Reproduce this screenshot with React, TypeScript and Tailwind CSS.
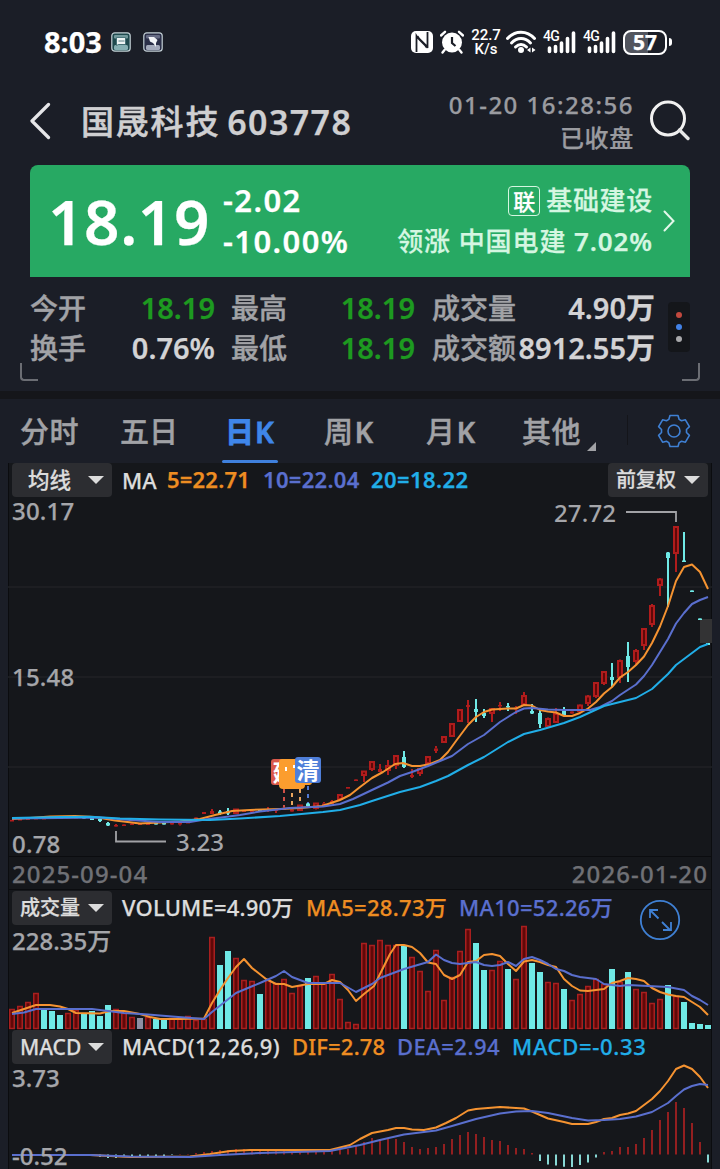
import type { ReactNode } from 'react';

type Candle = [kind: 'r' | 'c', high: number, open: number, close: number, low: number];
type Bar = [kind: 'r' | 'c' | 'g', top: number];

const X0 = 12;
const STEP = 8;

const RED = '#b01c1c';
const RED_FILL = '#600808';
const CYAN = '#6fe9e6';
const ORANGE = '#f59331';
const VIOLET = '#5a6fce';
const SKY = '#21aee8';

const candles: Candle[] = [
  ['r', 820, 820, 821.5, 821.5], ['r', 819, 819, 820.5, 820.5], ['r', 818.5, 818.5, 819.5, 819.5],
  ['r', 818, 818, 819, 819], ['r', 818, 818, 819, 819], ['r', 817.5, 817.5, 818.5, 818.5],
  ['c', 817.5, 817.5, 819, 819], ['r', 817, 817, 818.5, 818.5], ['r', 817, 817, 818.5, 818.5],
  ['c', 817, 817, 818.5, 818.5], ['c', 817, 818, 820, 820], ['c', 818, 819, 821, 822],
  ['c', 822, 823, 825.5, 826], ['r', 824, 825, 826.5, 827], ['r', 824, 824.5, 826, 826],
  ['r', 823, 823.5, 825, 825], ['r', 823, 823.5, 825, 825], ['r', 822.5, 823, 825, 825],
  ['c', 822.5, 823, 824.5, 824.5], ['c', 822.5, 823, 824.5, 824.5], ['r', 822.5, 823, 824.5, 825],
  ['r', 822.5, 823, 824.5, 825.5], ['r', 821, 821.5, 823.5, 823.5], ['r', 817, 817.5, 819, 819],
  ['r', 812, 812, 814, 814], ['r', 809, 811, 814, 814], ['c', 810, 811.5, 814, 815],
  ['c', 808, 811, 813.5, 815], ['r', 809, 809.5, 813, 814], ['r', 810, 810, 812, 812],
  ['r', 810, 811, 812.5, 813], ['c', 809, 810, 811, 811], ['r', 807, 809.5, 811, 812],
  ['r', 809, 809.5, 811, 813], ['r', 807, 808, 810, 810], ['r', 809, 809.5, 811.5, 812],
  ['r', 805, 805.5, 810, 811], ['c', 803, 803.5, 806, 807], ['r', 803, 803.5, 808, 809.5],
  ['r', 802, 803.5, 806, 806], ['r', 800, 801, 804, 804], ['r', 794, 795, 799, 800],
  ['r', 787, 787, 788.7, 788.7], ['r', 779, 779.5, 781, 781], ['r', 771, 771.5, 775, 782],
  ['r', 761, 762, 769, 771], ['r', 764, 769, 772, 772], ['r', 760, 766, 770, 775],
  ['r', 755, 756, 765, 769], ['c', 751, 757, 767, 768], ['r', 769, 775, 777, 778],
  ['r', 768, 769, 773, 776], ['r', 756, 757, 763, 764], ['r', 746, 748.5, 751, 753],
  ['r', 736, 737, 742, 743], ['r', 723, 724, 736, 737], ['r', 709, 710, 721, 722],
  ['r', 700, 705, 707, 723], ['c', 699, 709, 712, 722], ['c', 709, 713, 716, 718],
  ['r', 708, 709, 713, 722], ['r', 702, 705, 706.5, 711], ['c', 703, 706, 707.5, 711],
  ['r', 706, 707.5, 709.5, 714], ['r', 692, 696, 704, 706], ['c', 704, 711, 713.5, 714],
  ['c', 710, 713, 724, 728], ['r', 717.5, 719, 726, 727], ['r', 708, 714, 722, 723],
  ['c', 707, 709, 715, 716], ['r', 711, 711.5, 713.5, 714], ['r', 704.5, 705.5, 711, 712],
  ['r', 695, 696.5, 703, 706], ['r', 682, 683, 696, 698], ['r', 671, 672, 683, 685],
  ['c', 663, 677, 680, 687], ['r', 659.5, 661, 677, 683], ['c', 642, 656, 667, 682],
  ['r', 649, 651, 661, 665], ['r', 628, 629, 645, 650], ['r', 604, 606, 624, 627],
  ['r', 578, 579.5, 585, 596], ['c', 552, 552.5, 558, 607], ['r', 526, 527, 553, 572],
  ['c', 532, 560.5, 562, 562], ['c', 590.5, 590.5, 592, 592], ['c', 618.5, 618.5, 620, 620],
  ['c', 643, 643, 645, 645]
];

const volumes: Bar[] = [
  ['r', 1009], ['r', 1006], ['r', 1002], ['r', 993], ['c', 1009], ['c', 1011], ['c', 1015], ['r', 1013],
  ['r', 1010], ['c', 1013], ['c', 1011], ['c', 1016], ['c', 1005], ['r', 1009], ['r', 1013], ['r', 1017],
  ['g', 1018], ['r', 1017], ['c', 1019], ['c', 1019], ['r', 1018], ['r', 1018], ['r', 1016], ['r', 1020],
  ['r', 1019], ['r', 937], ['c', 965], ['c', 951], ['r', 958], ['r', 980], ['r', 981], ['c', 994],
  ['r', 980], ['r', 983], ['r', 979], ['r', 993], ['r', 986], ['c', 978], ['r', 976], ['r', 983],
  ['r', 974], ['r', 999], ['r', 1022], ['r', 1024], ['r', 943], ['r', 945], ['r', 940], ['r', 945],
  ['r', 945], ['c', 946], ['r', 957], ['r', 971], ['r', 991], ['r', 950], ['r', 1000], ['r', 977],
  ['r', 951], ['r', 929], ['c', 943], ['c', 970], ['r', 970], ['r', 961], ['c', 969], ['r', 979],
  ['r', 926], ['c', 963], ['c', 972], ['r', 982], ['r', 983], ['c', 989], ['r', 1000], ['r', 994],
  ['r', 986], ['r', 979], ['r', 984], ['c', 969], ['r', 982], ['c', 972], ['r', 989], ['r', 992],
  ['r', 1003], ['r', 999], ['c', 985], ['r', 996], ['c', 1002], ['c', 1023], ['c', 1024], ['c', 1025]
];

// signed bar ends around the zero line of the histogram
const MACD_ZERO = 1154.5;
const macdBars = [
  1155, 1155, 1155, 1154, 1154, 1155, 1156, 1156, 1156, 1156, 1156, 1157, 1158, 1158, 1157, 1157, 1156, 1156, 1156,
  1156, 1155, 1154, 1154, 1153, 1152, 1151, 1150, 1150, 1149, 1149, 1150, 1150, 1151, 1151, 1151, 1152, 1151, 1152,
  1152, 1152, 1151, 1150, 1149, 1146, 1142, 1138, 1139, 1139, 1139, 1142, 1147, 1149, 1148, 1147, 1144, 1139, 1135,
  1132, 1134, 1137, 1140, 1141, 1145, 1148, 1149, 1153, 1161, 1164.5, 1165.5, 1166.7, 1167, 1165, 1162.5, 1157.5,
  1152, 1151, 1147, 1147, 1144, 1138, 1130, 1120, 1112, 1102, 1108, 1123, 1142, 1162.5
];

// keep the histogram start clear of the value label
const macdStart = 10;

const ma5 =
  '12,819 30,818 50,816.5 75,816 95,817 115,820.5 140,823.5 160,822.5 180,821.5 200,819 215,815 232,811 250,810 280,809 300,808 322,806 340,800 350,795 360,787 372,778 383,772 395,764 403,763 412,766 420,766 430,764 440,760 448,752 456,741 468,725 476,717 484,712 492,709.5 500,709 508,708.5 516,708.5 524,705 532,705.5 540,710 548,711.5 556,712.5 564,716 572,716 580,713 588,708.5 596,702 604,693.5 612,687 620,677.5 628,672 636,665 644,656.5 652,643 660,626.5 668,606 676,581 684,567 692,564.5 700,572 708,589';
const ma10 =
  '12,818.5 60,818 100,817.5 130,820 160,822 190,822 205,819.5 225,817 240,815 260,811.5 290,808 323,806.5 340,804 353,799 372,790 388,782.5 400,776 412,772 428,766 440,761 452,756 468,744 484,735 500,722 508,717 516,712 524,708.5 532,708 548,709.5 564,710 590,710 600,707 612,701 620,695 636,684.5 644,676 652,665 660,652 668,639 676,623.5 684,613 692,604 700,600 708,597';
const ma20 =
  '12,818 60,817 90,816.7 120,818.5 160,819.5 210,820 240,818.5 280,816 323,812 340,810 360,805 372,801 400,792 420,787 436,781 448,776 468,765 484,757 508,742 524,734 540,730 564,723 580,717 604,706 620,702 636,698 652,689 668,674 676,665 692,653 700,647 708,644';

const volMa5 =
  '12,1013 24,1009 36,1005 50,1005 60,1006.5 68,1009 76,1013 100,1013.5 110,1011 124,1011 140,1014 150,1017 160,1019 180,1019 204,1018.5 212,1003 220,990 228,978 236,967 244,959 252,968 266,979 276,984 284,984 292,987 308,984 324,984 332,980 340,982 348,990 356,1001 364,994 374,986 382,970 390,954 396,945 404,945 412,947 420,953 428,962.5 436,964 444,975 452,979 460,975 468,962 476,961 484,955 492,954 500,956 508,964 516,971 524,961.5 532,960 540,962 548,965 556,967 564,979 572,986 580,990.5 588,991 604,989 612,983 620,981 628,978 636,979 644,981 652,988 660,992 668,994.5 676,996 684,997 692,1002 700,1007 708,1015';
const volMa10 =
  '12,1014 24,1012.5 36,1009 60,1009 92,1009 108,1011 124,1013 148,1014.5 172,1016.5 204,1019 212,1012 236,993 260,983 276,976 284,971 292,977 308,983 340,983 356,992 372,984 380,978 404,969 428,962 436,954.5 444,960 452,963 460,964 476,962 484,965 492,966 500,965 508,962 516,966 524,959 532,957 540,960 548,964 556,969 564,971 572,975 580,977 596,979 604,984 620,986 628,985 668,987 684,990 692,996 700,1000 708,1005';

const dif =
  '12,1155 90,1155 130,1157 190,1156.5 210,1154 230,1151 250,1150 330,1150 350,1145 360,1139 372,1133 388,1130 396,1128 404,1128 412,1129.5 424,1130 436,1127.5 446,1123 456,1118 468,1110.5 476,1109 500,1107 524,1108.5 532,1111.5 540,1115 548,1118.5 564,1122 572,1124 588,1124 596,1122 604,1119 612,1118 620,1115 628,1113.5 636,1111 644,1105 652,1099 660,1091 668,1081 676,1069 684,1065.5 692,1069 700,1077 708,1088';
const dea =
  '12,1155 90,1155 130,1156.5 190,1157 220,1155 260,1153 330,1151 350,1147 360,1145 380,1140 404,1134.5 436,1130.5 452,1126 476,1119 500,1113.5 516,1111.5 532,1111 548,1113 572,1118 588,1120.5 604,1120 620,1119 636,1116.5 652,1112 668,1103 676,1096 684,1089.5 692,1086 700,1084 708,1085';

function Line({ points, color }: { points: string; color: string }) {
  return (
    <polyline points={points} fill="none" stroke={color} strokeWidth={2} strokeLinejoin="round" />
  );
}

function AppBadge({ dark }: { dark?: boolean }) {
  return (
    <svg className="size-5" viewBox="0 0 20 20">
      <rect x="0.8" y="0.8" width="18.4" height="18.4" rx="3" fill={dark ? '#2b2f48' : '#1f4a4e'} stroke="#c3cfd4" strokeWidth="1.2" />
      <rect x="3" y="3" width="14" height="3.5" rx="1" fill={dark ? '#666b84' : '#72999c'} />
      <rect x="3" y="13" width="14" height="5" rx="1.5" fill={dark ? '#a3a9ba' : '#86b0b3'} />
      {dark ? (
        <path d="M5.5 5H11l3.5 3-1.500 3v4l-3-4-3-1.500z" fill="#f1f3f6" />
      ) : (
        <path d="M5.5 5.500h9v7h-7l-2 1z M7.5 9h6" fill="#eef4f4" stroke="#35656a" strokeWidth="0.8" />
      )}
    </svg>
  );
}

function Signal() {
  return (
    <div className="relative h-6 w-8">
      <span className="absolute top-0 left-0 font-['Roboto',sans-serif] text-[14px] leading-3 font-medium tracking-tighter [-webkit-text-stroke:0px]">
        4G
      </span>
      <svg className="block" width="33" height="24" viewBox="0 0 33 24">
        <path
          d="M6.5 18v3.500M12.500 16.500v5M18.500 13v8.500M24.500 8.500v13M30.500 3v18.500"
          stroke="#fff"
          strokeWidth="3.6"
          strokeLinecap="round"
        />
      </svg>
    </div>
  );
}

function StatusBar() {
  return (
    <div className="flex h-[84px] items-center justify-between pr-12 pl-11 text-white">
      <div className="flex items-center">
        <span className="w-[67px] text-[29px] leading-8 font-bold">8:03</span>
        <AppBadge />
        <span className="w-3" />
        <AppBadge dark />
      </div>
      <div className="flex items-center">
        <svg className="mr-[7px]" width="22" height="22" viewBox="0 0 22 22">
          <rect width="22" height="22" rx="5" fill="#fff" />
          <path d="M5.5 21V5c3 5 8 7 10 11.500M16.500 1v16c-2-5-8-7-10-12" fill="none" stroke="#1b1e27" strokeWidth="1.8" />
        </svg>
        <svg className="mr-[7px]" width="24" height="24" viewBox="0 0 24 24">
          <circle cx="12" cy="12.5" r="10" fill="#fff" />
          <path d="M1 5.500L5 1.800M23 5.500l-4-3.700M4.500 20L2.500 22.500M19.500 20l2 2.500" stroke="#fff" strokeWidth="2.4" strokeLinecap="round" />
          <path d="M12 7v6l3.500 3" fill="none" stroke="#1b1e27" strokeWidth="2.2" />
        </svg>
        <div className="mr-[5px] w-[30px] text-center font-['Roboto',sans-serif] text-[15px] leading-[14px] font-medium [-webkit-text-stroke:0px]">
          <div>22.7</div>
          <div>K/s</div>
        </div>
        <svg className="mr-[7px]" width="30" height="24" viewBox="0 0 30 24">
          <path d="M1.500 8.500C9 0 21 0 28.500 8.500" fill="none" stroke="#fff" strokeWidth="3" strokeLinecap="round" />
          <path d="M5.500 13c5.500-6 13.500-6 19 0" fill="none" stroke="#fff" strokeWidth="3" strokeLinecap="round" />
          <path d="M9.500 17c3.500-3.500 7.500-3.500 11 0" fill="none" stroke="#fff" strokeWidth="3" strokeLinecap="round" />
          <circle cx="15" cy="20" r="3" fill="#fff" />
          <path d="M24.500 17.500v5l-3.500-2.500zM26 17.500v5l3.500-2.500z" fill="#fff" />
        </svg>
        <div className="mr-2">
          <Signal />
        </div>
        <div className="mr-2">
          <Signal />
        </div>
        <div className="flex h-[25px] w-[44px] items-center justify-center rounded-[8px] border-2 border-white bg-linear-to-r from-[#52555e] from-57% to-[#1b1e27] to-57% text-[21px] leading-5 font-bold">
          57
        </div>
        <span className="ml-0.5 h-2 w-[3px] rounded-r-sm bg-white" />
      </div>
    </div>
  );
}

function Header() {
  return (
    <header className="flex h-[81px] pl-[30px]">
      <svg className="mt-[18px]" width="22" height="38" viewBox="0 0 22 38">
        <path d="M18.500 2.500L2 19l16.500 16.500" fill="none" stroke="#e6e6e8" strokeWidth="3.2" strokeLinecap="round" strokeLinejoin="round" />
      </svg>
      <h1 className="ml-[29px] flex h-[75px] items-center text-[#cfcfd1]">
        <span className="text-[33px] leading-10 font-medium tracking-[1.8px] [-webkit-text-stroke:0.5px]">国晟科技</span>
        <span className="ml-[7px] text-[34px] leading-10 font-semibold tracking-[1.4px]">603778</span>
      </h1>
      <div className="ml-auto pt-1 text-right text-[#9a9ba0]">
        <div className="text-[24px] leading-[34px] font-medium tracking-[1.5px]">01-20 16:28:56</div>
        <div className="text-[24px] leading-8 font-medium tracking-[0.7px]">已收盘</div>
      </div>
      <svg className="mt-4 mr-[29px] ml-[15px]" width="42" height="42" viewBox="0 0 42 42">
        <circle cx="19" cy="18.5" r="16.5" fill="none" stroke="#f0f0f0" strokeWidth="3" />
        <path d="M30.500 30l8.500 8.500" stroke="#e8e8e8" strokeWidth="3.4" strokeLinecap="round" />
      </svg>
    </header>
  );
}

function PriceCard() {
  return (
    <section className="mx-[30px] flex h-28 items-center rounded-t-[8px] bg-[#27a963] text-white">
      <div className="w-[193px] pl-[18px] text-[62px] leading-[112px] font-semibold tracking-[0.6px]">18.19</div>
      <div className="text-[31px] leading-[41px] font-semibold tracking-[1.4px]">
        <div>-2.02</div>
        <div>-10.00%</div>
      </div>
      <div className="ml-auto text-right text-[26px] leading-[41px] font-medium text-[#d5f6e1]">
        <div className="flex items-center justify-end">
          <span className="mr-1.5 flex h-[30px] w-8 items-center justify-center rounded-[4px] border border-[#d5f6e1] text-[22px] leading-6 text-white">
            联
          </span>
          <span className="tracking-[0.7px]">基础建设</span>
        </div>
        <div className="tracking-[0.9px]">
          领涨 中国电建 <span className="font-semibold">7.02%</span>
        </div>
      </div>
      <svg className="mr-[15px] ml-2.5" width="12" height="22" viewBox="0 0 12 22">
        <path d="M1.500 1.500l9 9.500-9 9.500" fill="none" stroke="#e3f8ea" strokeWidth="2" strokeLinecap="round" />
      </svg>
    </section>
  );
}

function Stat({ label, value, green }: { label: string; value: string; green?: boolean }) {
  return (
    <div className="flex items-center justify-between leading-10">
      <span className="pt-px text-[28px] leading-[39px] font-medium whitespace-nowrap text-[#a1a2a6] [-webkit-text-stroke:0.4px]">
        {label}
      </span>
      <span
        className={`text-[29px] font-semibold whitespace-nowrap ${green ? 'text-[#1d9a20]' : 'text-[#d3d3d5]'}`}
      >
        {value}
      </span>
    </div>
  );
}

function Stats() {
  return (
    <section className="flex h-[114px] pt-[11px] pl-[30px]">
      <div className="w-[185px]">
        <Stat label="今开" value="18.19" green />
        <Stat label="换手" value="0.76%" />
      </div>
      <div className="ml-4 w-[184px]">
        <Stat label="最高" value="18.19" green />
        <Stat label="最低" value="18.19" green />
      </div>
      <div className="ml-[17px] w-[223px]">
        <Stat label="成交量" value="4.90万" />
        <Stat label="成交额" value="8912.55万" />
      </div>
      <div className="mt-[14px] ml-[13px] flex h-[50px] w-[22px] flex-col items-center justify-center gap-1.5 rounded-[4px] bg-[#14161a]">
        <span className="size-1.5 rounded-full bg-[#c2493e]" />
        <span className="size-1.5 rounded-full bg-[#4282e6]" />
        <span className="size-1.5 rounded-full bg-[#a9a9ab]" />
      </div>
    </section>
  );
}

function Tabs() {
  return (
    <nav className="flex h-16 pl-5 text-[29px] leading-[65px] font-medium text-[#a1a2a6] [-webkit-text-stroke:0.4px]">
      <span className="w-[100px] tracking-[0.6px]">分时</span>
      <span className="w-[102px]">五日</span>
      <span className="relative mr-[46px] h-16 w-14 text-center font-semibold tracking-[1px] text-[#3f86ea] [-webkit-text-stroke:0.8px]">
        日K
        <span className="absolute bottom-0 left-0 h-[3px] w-full rounded-full bg-[#3f80dd]" />
      </span>
      <span className="w-[102px] tracking-[1.5px]">
        周<span className="font-semibold">K</span>
      </span>
      <span className="w-[96px] tracking-[1.5px]">
        月<span className="font-semibold">K</span>
      </span>
      <span className="w-[65px] tracking-[0.6px]">其他</span>
      <svg className="mt-[43px]" width="9" height="9" viewBox="0 0 9 9">
        <path d="M9 0v9H0z" fill="#a1a2a6" />
      </svg>
      <span className="mt-4 ml-[31px] h-[30px] w-px bg-[#14151a]" />
      <svg className="mt-[15px] ml-[29px]" width="34" height="34" viewBox="-17 -17 34 34">
        <path
          d="M-4-15.500H4L5.200-11.600 7.500-10.300 11.400-11.200 15.400-4.300 12.500-1.500V1.500L15.400 4.300 11.400 11.200 7.500 10.300 5.200 11.600 4 15.500H-4L-5.200 11.600-7.500 10.300-11.400 11.200-15.400 4.300-12.500 1.500V-1.500L-15.400-4.300-11.400-11.200-7.500-10.300-5.200-11.600z"
          fill="none"
          stroke="#3f80d4"
          strokeWidth="1.6"
          strokeLinejoin="round"
        />
        <circle r="6" fill="none" stroke="#3f80d4" strokeWidth="1.6" />
      </svg>
    </nav>
  );
}

function Chip({ children }: { children: ReactNode }) {
  return (
    <div className="flex h-[34px] w-[100px] shrink-0 items-center justify-between rounded-[4px] bg-[#2c2d31] pr-2 pl-2 text-[20px] leading-[34px] font-medium whitespace-nowrap text-[#dcdcdc]">
      {children}
      <svg width="16" height="8" viewBox="0 0 16 8">
        <path d="M0 0h16L8 8z" fill="#dcdcdc" />
      </svg>
    </div>
  );
}

function Candles() {
  return (
    <svg className="absolute inset-0" width="704" height="394" viewBox="8 463 704 394">
      <path d="M8 587h704M8 677h704M8 767h704" stroke="#202226" strokeWidth="1.5" />
      <rect x="700" y="619" width="12" height="24" fill="#333334" />
      {candles.map(([kind, high, open, close, low], i) => {
        const x = X0 + i * STEP;
        const h = Math.max(close - open, 1.5);
        if (kind === 'c') {
          return (
            <g key={i} fill={CYAN}>
              <rect x={x - 1} y={high} width="2" height={low - high} />
              <rect x={x - 2} y={open} width="4" height={h} />
            </g>
          );
        }
        return (
          <g key={i} stroke={RED} strokeWidth="2">
            <path d={`M${x} ${high}V${open}M${x} ${close}V${low}`} />
            {h > 3 ? (
              <rect x={x - 2} y={open} width="4" height={h} fill={RED_FILL} strokeWidth="2" />
            ) : (
              <rect x={x - 2} y={open} width="4" height={h} fill={RED} stroke="none" />
            )}
          </g>
        );
      })}
      <Line points={ma5} color={ORANGE} />
      <Line points={ma10} color={VIOLET} />
      <Line points={ma20} color={SKY} />
      <path d="M626 512h50v10M116 831v10.500h50" fill="none" stroke="#a1a2a6" strokeWidth="1.8" />
      <g fontSize="24" fontWeight="550" fill="#a5a6aa">
        <text x="554" y="522" textLength="62">27.72</text>
        <text x="176" y="851" textLength="48">3.23</text>
      </g>
      <path d="M284 789v18" stroke="#cf5046" strokeWidth="2" strokeDasharray="4 4" />
      <path d="M292 793v14M300 789v16" stroke="#e9a55e" strokeWidth="2" strokeDasharray="4 4" />
      <path d="M308 786v17" stroke="#5078d2" strokeWidth="2" strokeDasharray="4 4" />
      <g fontSize="23" fontWeight="700" fill="#fff">
        <rect x="271" y="759" width="26" height="26" rx="3" fill="#d9594b" />
        <text x="272.5" y="781">建</text>
        <rect x="279" y="759" width="33" height="26" rx="3" fill="#fb9d2e" />
        <rect x="279" y="763" width="26" height="26" rx="4" fill="#fb9d2e" />
        <path d="M286 767v4M294 765v3" stroke="#fff" strokeWidth="2" />
        <rect x="295" y="757" width="26" height="26" rx="3" fill="#4f7fd9" />
        <text x="296.5" y="779">清</text>
      </g>
    </svg>
  );
}

function PricePanel() {
  return (
    <section className="relative h-[394px] border-b border-[#0b0c0f]">
      <Candles />
      <div className="relative flex items-start pr-1 pl-1 text-[22px] leading-[32px] font-medium whitespace-nowrap">
        <Chip>
          <span className="pl-2 text-[21.5px]">均线</span>
        </Chip>
        <span className="ml-2.5 w-[45px] leading-[34px] text-[#dcdcdc]">MA</span>
        <span className="w-24 font-semibold tracking-[0.2px] text-[#ee8d22]">5=22.71</span>
        <span className="w-[108px] font-semibold tracking-[0.3px] text-[#5a6fce]">10=22.04</span>
        <span className="font-semibold tracking-[0.4px] text-[#21aee8]">20=18.22</span>
        <div className="ml-auto">
          <Chip>前复权</Chip>
        </div>
      </div>
      <div className="relative flex h-[360px] flex-col pl-1 text-[24px] leading-[30px] font-medium tracking-[0.2px] text-[#a5a6aa]">
        <span className="-mt-px">30.17</span>
        <span className="mt-[136px]">15.48</span>
        <span className="mt-auto -mb-0.5">0.78</span>
      </div>
    </section>
  );
}

function VolumePanel() {
  return (
    <section className="relative h-[140px] border-b border-[#0b0c0f]">
      <svg className="absolute inset-0" width="704" height="140" viewBox="8 890 704 140">
        {volumes.map(([kind, top], i) => {
          const x = X0 + i * STEP;
          if (kind === 'r') {
            return (
              <rect key={i} x={x - 2.25} y={top + 0.5} width="4.5" height={1028 - top} fill={RED_FILL} stroke="#a81f1f" strokeWidth="1.5" />
            );
          }
          return <rect key={i} x={x - 3} y={top} width="6" height={1029 - top} fill={kind === 'g' ? '#8f90a3' : CYAN} />;
        })}
        <Line points={volMa5} color={ORANGE} />
        <Line points={volMa10} color={VIOLET} />
        <g fill="none" stroke="#3f80d4" strokeWidth="1.8">
          <circle cx="660" cy="920" r="19.2" />
          <path d="M650 918v-8h8M650 910l8.500 8.500M662 922l8.500 8.500M671 922v8h-8" />
        </g>
      </svg>
      <div className="relative flex items-start pt-px pl-1 text-[22px] leading-[32px] font-medium whitespace-nowrap">
        <Chip>成交量</Chip>
        <span className="ml-2.5 w-[184px] tracking-[0.2px] text-[#dcdcdc]">VOLUME=4.90万</span>
        <span className="w-[153px] tracking-[0.3px] text-[#ee8d22]">MA5=28.73万</span>
        <span className="tracking-[0.3px] text-[#5a6fce]">MA10=52.26万</span>
      </div>
      <div className="relative pl-1 text-[24px] leading-[32px] font-medium text-[#a5a6aa]">228.35万</div>
    </section>
  );
}

function MacdPanel() {
  return (
    <section className="relative h-[139px]">
      <svg className="absolute inset-0" width="704" height="139" viewBox="8 1030 704 139">
        {macdBars.map((end, i) => {
          if (i < macdStart) return null;
          const x = X0 + i * STEP;
          const down = end > MACD_ZERO;
          return (
            <path key={i} d={`M${x} ${MACD_ZERO}V${end}`} stroke={down ? '#88d8d5' : '#931f20'} strokeWidth="2" />
          );
        })}
        <Line points={dif} color={ORANGE} />
        <Line points={dea} color={VIOLET} />
      </svg>
      <div className="relative flex items-start pl-1 text-[22px] leading-[32px] font-medium whitespace-nowrap">
        <Chip>
          <span className="text-[21px]">MACD</span>
        </Chip>
        <span className="ml-2.5 w-[170px] tracking-[0.4px] text-[#dcdcdc]">MACD(12,26,9)</span>
        <span className="w-[105px] tracking-[0.2px] text-[#ee8d22]">DIF=2.78</span>
        <span className="w-[115px] tracking-[0.5px] text-[#5a6fce]">DEA=2.94</span>
        <span className="tracking-[0.7px] text-[#21aee8]">MACD=-0.33</span>
      </div>
      <div className="relative flex h-[105px] flex-col justify-between pl-1 text-[24px] leading-[30px] font-medium text-[#a5a6aa]">
        <span className="-mt-px">3.73</span>
        <span className="-mb-0.5">-0.52</span>
      </div>
    </section>
  );
}

export default function App() {
  return (
    <div className="h-[1169px] w-[720px] overflow-hidden bg-[#1b1e27] font-['Noto_Sans','Noto_Sans_CJK_SC',sans-serif] [-webkit-text-stroke:0.25px]">
      <StatusBar />
      <Header />
      <PriceCard />
      <div className="relative">
        <Stats />
        <span className="absolute bottom-2.5 left-5 h-[18px] w-[18px] rounded-bl-[4px] border-b-2 border-l-2 border-[#6b6d73]" />
        <span className="absolute right-5 bottom-2.5 h-[18px] w-[18px] rounded-br-[4px] border-r-2 border-b-2 border-[#6b6d73]" />
      </div>
      <div className="h-2 bg-[#15161a]" />
      <Tabs />
      <main className="mx-2 h-[706px] border-x border-[#0b0c0f] bg-[#15171b]">
        <div className="-mx-px">
          <PricePanel />
          <div className="flex h-[33px] items-center justify-between border-b border-[#0b0c0f] px-1 pt-0.5 text-[24px] leading-8 font-medium tracking-[1.1px] text-[#6f7075]">
            <span>2025-09-04</span>
            <span>2026-01-20</span>
          </div>
          <VolumePanel />
          <MacdPanel />
        </div>
      </main>
    </div>
  );
}
